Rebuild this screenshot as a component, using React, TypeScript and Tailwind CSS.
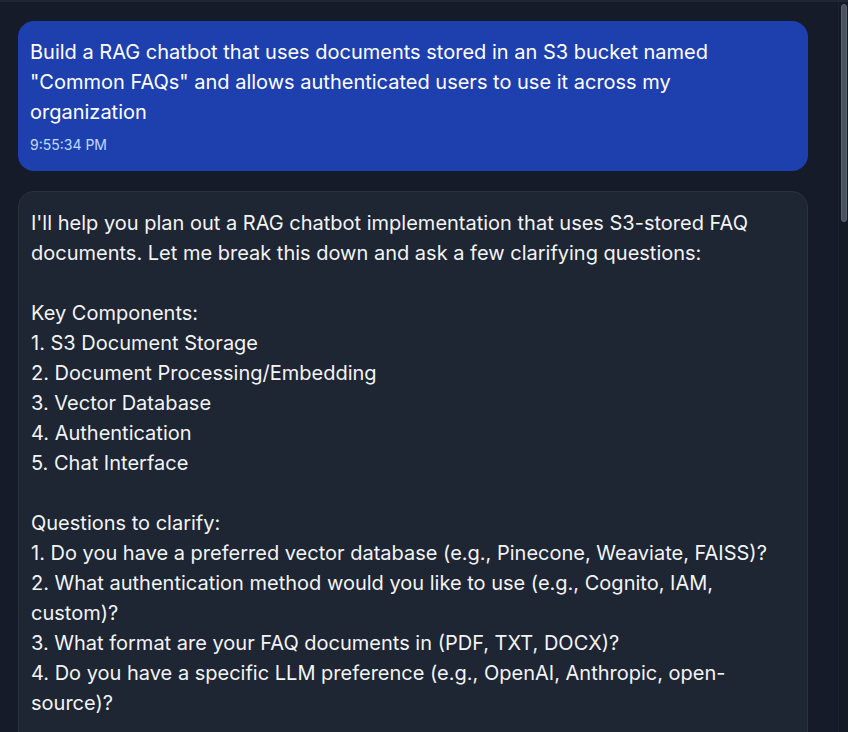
import React from 'react';

const assistantText = `I'll help you plan out a RAG chatbot implementation that uses S3-stored FAQ documents. Let me break this down and ask a few clarifying questions:

Key Components:
1. S3 Document Storage
2. Document Processing/Embedding
3. Vector Database
4. Authentication
5. Chat Interface

Questions to clarify:
1. Do you have a preferred vector database (e.g., Pinecone, Weaviate, FAISS)?
2. What authentication method would you like to use (e.g., Cognito, IAM, custom)?
3. What format are your FAQ documents in (PDF, TXT, DOCX)?
4. Do you have a specific LLM preference (e.g., OpenAI, Anthropic, open-source)?`;

function UserBubble({ text, time }: { text: string; time: string }) {
  return (
    <div className="bg-[#1e40af] rounded-2xl px-3 py-4 text-white">
      <p className="pr-8 text-xl leading-[30px] whitespace-pre-wrap">{text}</p>
      <div className="mt-2 text-sm leading-5 text-blue-200">{time}</div>
    </div>
  );
}

function AssistantBubble({ text }: { text: string }) {
  return (
    <div className="bg-[#1e2533] border border-[#2a3241] rounded-2xl px-3 pt-4 pb-10 text-gray-100">
      <p className="text-xl leading-[30px] whitespace-pre-wrap">{text}</p>
    </div>
  );
}

export default function App() {
  return (
    <div
      className="h-screen flex overflow-hidden bg-[#151b29] border-t-2 border-[#1f2634]"
      style={{ fontFamily: 'Inter, "Noto Sans", sans-serif' }}
    >
      <div className="flex-1 min-w-0 overflow-hidden">
        <div className="pl-[18px] pr-[30px] pt-[19px] flex flex-col gap-5">
          <UserBubble
            text={'Build a RAG chatbot that uses documents stored in an S3 bucket named "Common FAQs" and allows authenticated users to use it across my organization'}
            time="9:55:34 PM"
          />
          <AssistantBubble text={assistantText} />
        </div>
      </div>
      {/* scrollbar */}
      <div className="w-[10px] shrink-0 bg-[#141a26] border-l border-[#1b2130] pt-[2px]">
        <div className="ml-[2px] w-[6px] h-[218px] rounded-full bg-[#4b5262] border border-[#5b6272]" />
      </div>
    </div>
  );
}
